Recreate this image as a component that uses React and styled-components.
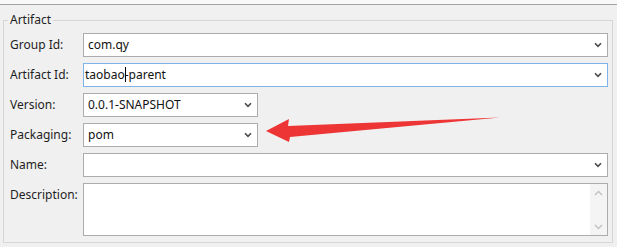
import React from "react";
import styled, { createGlobalStyle } from "styled-components";

const Global = createGlobalStyle`
  html, body { margin: 0; padding: 0; }
  body {
    background: #f0f0f0;
    font-family: "Noto Sans", "Segoe UI", "Liberation Sans", sans-serif;
    font-size: 12px;
    color: #1e1e1e;
  }
`;

const Page = styled.div`
  position: relative;
  width: 617px;
  height: 247px;
  overflow: hidden;
  background: #f0f0f0;
`;

const TopStrip = styled.div`
  height: 4px;
  background: #f8f8f8;
  border-bottom: 1px solid #a3a3a3;
`;

const Group = styled.fieldset`
  margin: 7px 4px 0 3px;
  padding: 5px 4px 6px 6px;
  border: 1px solid #d6d6d6;
  min-width: 0;
`;

const Legend = styled.legend`
  font-size: 12px;
  line-height: 16px;
  padding: 0 2px;
  margin-left: -2px;
  color: #1e1e1e;
`;

const Form = styled.div`
  display: grid;
  grid-template-columns: 73px 1fr;
  row-gap: 6px;
  align-items: start;
`;

const Label = styled.label`
  line-height: 24px;
  white-space: nowrap;
`;

const Combo = styled.div`
  box-sizing: border-box;
  height: 24px;
  width: ${(p) => (p.$narrow ? "175px" : "100%")};
  background: #fff;
  border: 1px solid ${(p) => (p.$focused ? "#7eb4ea" : "#acacac")};
  display: flex;
  align-items: center;
  padding: 0 0 0 ${(p) => (p.$indent ?? 4)}px;
`;

const ComboText = styled.span`
  flex: 1;
  white-space: nowrap;
  line-height: 22px;
  color: #111;
`;

const Caret = styled.span`
  display: inline-block;
  width: 1px;
  height: 15px;
  background: #000;
  vertical-align: -3px;
  margin-right: -1px;
`;

const Chevron = styled.svg`
  width: 8px;
  height: 6px;
  margin-right: 5px;
  flex: none;
`;

const TextArea = styled.div`
  box-sizing: border-box;
  height: 53px;
  background: #fff;
  border: 1px solid #acacac;
  display: flex;
  justify-content: flex-end;
`;

const ScrollBar = styled.div`
  width: 17px;
  background: #f4f4f4;
  display: flex;
  flex-direction: column;
  justify-content: space-between;
  align-items: center;
  padding: 6px 0 5px;
  box-sizing: border-box;
`;

const ScrollArrow = styled.svg`
  width: 9px;
  height: 6px;
`;

const ArrowOverlay = styled.svg`
  position: absolute;
  left: 0;
  top: 0;
  pointer-events: none;
`;

const Down = () => (
  <Chevron viewBox="0 0 8 6">
    <path d="M1 1.2 L4 4.3 L7 1.2" fill="none" stroke="#4a4a4a" strokeWidth="1.6" />
  </Chevron>
);

const ComboBox = ({ children, ...rest }) => (
  <Combo {...rest}>
    <ComboText>{children}</ComboText>
    <Down />
  </Combo>
);

export default function App() {
  return (
    <>
      <Global />
      <Page>
        <TopStrip />
        <Group>
          <Legend>Artifact</Legend>
          <Form>
            <Label>Group Id:</Label>
            <ComboBox>com.qy</ComboBox>

            <Label>Artifact Id:</Label>
            <ComboBox $focused $indent={1}>
              taobao<Caret />-parent
            </ComboBox>

            <Label>Version:</Label>
            <ComboBox $narrow>0.0.1-SNAPSHOT</ComboBox>

            <Label>Packaging:</Label>
            <ComboBox $narrow>pom</ComboBox>

            <Label>Name:</Label>
            <ComboBox />

            <Label>Description:</Label>
            <TextArea>
              <ScrollBar>
                <ScrollArrow viewBox="0 0 9 6">
                  <path d="M1 5 L4.5 1.5 L8 5" fill="none" stroke="#c2c2c2" strokeWidth="1.4" />
                </ScrollArrow>
                <ScrollArrow viewBox="0 0 9 6">
                  <path d="M1 1 L4.5 4.5 L8 1" fill="none" stroke="#c2c2c2" strokeWidth="1.4" />
                </ScrollArrow>
              </ScrollBar>
            </TextArea>
          </Form>
        </Group>
        <ArrowOverlay width="617" height="247" viewBox="0 0 617 247">
          <polygon
            points="266,131 289,119 288,126 500,117.5 290,137 289,142"
            fill="#ee3535"
          />
        </ArrowOverlay>
      </Page>
    </>
  );
}
